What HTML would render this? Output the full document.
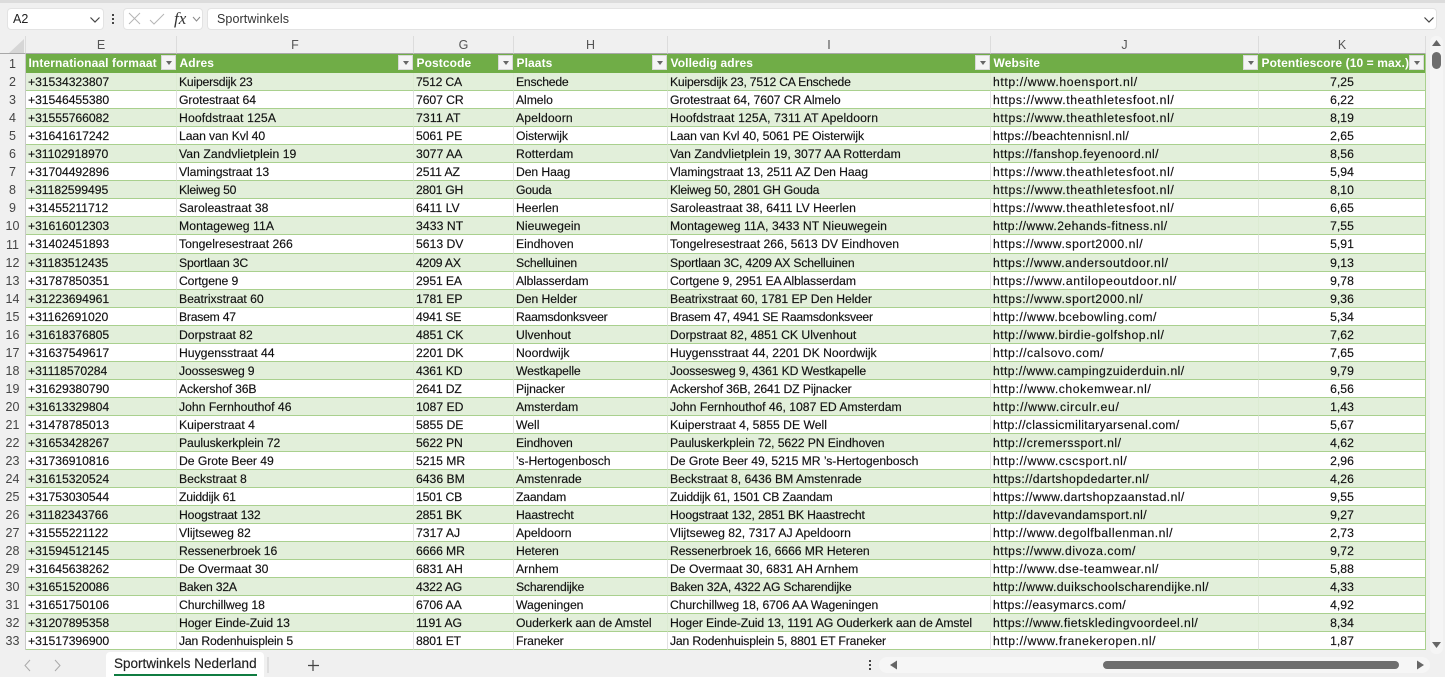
<!DOCTYPE html>
<html><head><meta charset="utf-8"><style>
html,body{margin:0;padding:0;width:1445px;height:677px;overflow:hidden;background:#f0f0f0;font-family:"Liberation Sans",sans-serif}
*{box-sizing:border-box}
.abs{position:absolute}
.box{position:absolute;background:#fff;border:1px solid #e3e3e3;border-radius:4px}
table{position:absolute;left:0;top:36px;border-collapse:separate;border-spacing:0;table-layout:fixed;width:1426px}
td{padding:0;overflow:hidden;white-space:nowrap;font-weight:normal}
.ch td{height:18px;text-align:center;font-size:12.500px;color:#555;border-bottom:1px solid #a8a8a8;border-right:1px solid #dcdcdc;padding-top:1px}
.hd td{height:19px;background:#70ad47;color:#fff;font-weight:bold;font-size:12px;padding:0 0 1px 2.500px;letter-spacing:.1px;position:relative}
tr.r td{height:18px;font-size:12.2px;color:#111;padding-left:2px;border-bottom:1px solid #a9d08e;border-right:1px solid #e2e2e2;background:#fff;-webkit-text-stroke:.15px #111}
tbody tr.r:nth-child(odd) td{background:#e2efda;border-right-color:#dcebd2}
tr.tall td{height:19px!important}
tr.r td:nth-child(2){letter-spacing:-.05px}
tr.r td:nth-child(7){letter-spacing:.42px}
td.n{background:#f0f0f0!important;border:0!important;border-right:1px solid #c8c8c8!important;text-align:center;padding:0!important;color:#444!important;font-size:12.500px!important;font-weight:normal!important;letter-spacing:0!important;-webkit-text-stroke:0!important}
tr.r td.c{text-align:center;padding-left:0;letter-spacing:0}
tr.r td:last-child,.hd td:last-child{border-right:1px solid #a9d08e!important}
.f{position:absolute;right:1px;top:1px;width:15px;height:15px;background:#f4f4f4;border:1px solid #d8d8d8}
.f:after{content:"";position:absolute;left:4px;top:5px;border:3px solid transparent;border-top:4px solid #666;border-bottom:0}
</style></head><body>
<div class="abs" style="left:0;top:0;width:1445px;height:3px;background:#dcdcdc"></div>
<div class="box" style="left:7px;top:8px;width:97px;height:22px;font-size:12.500px;color:#222;padding:3px 0 0 5px">A2
<svg class="abs" style="left:81px;top:7px" width="12" height="8"><path d="M1.5 1.5 L6 6 L10.5 1.5" fill="none" stroke="#444" stroke-width="1.2"/></svg></div>
<svg class="abs" style="left:110px;top:13px" width="6" height="13"><g fill="#444"><rect x="2" y="1" width="2" height="2"/><rect x="2" y="5" width="2" height="2"/><rect x="2" y="9" width="2" height="2"/></g></svg>
<div class="box" style="left:123px;top:8px;width:80px;height:22px"></div>
<svg class="abs" style="left:127px;top:11px" width="76" height="17"><path d="M2 2 L13 13 M13 2 L2 13" stroke="#b5b5b5" stroke-width="1" fill="none"/><path d="M23 9 L27 13 L37 3" stroke="#b5b5b5" fill="none"/><path d="M66 6 L69.500 10 L73 6" stroke="#888" fill="none"/></svg>
<div class="abs" style="left:174px;top:9px;font:italic 17px 'Liberation Serif',serif;color:#333">fx</div>
<div class="box" style="left:207px;top:8px;width:1230px;height:22px;font-size:12.500px;color:#333;padding:3px 0 0 9px;letter-spacing:.1px">Sportwinkels
<svg class="abs" style="left:1215px;top:7px" width="12" height="8"><path d="M1.5 1.5 L6 6 L10.500 1.5" fill="none" stroke="#444" stroke-width="1.2"/></svg></div>
<table>
<colgroup><col style="width:26px"><col style="width:151px"><col style="width:237px"><col style="width:100px"><col style="width:154px"><col style="width:323px"><col style="width:268px"><col style="width:167px"></colgroup>
<tbody>
<tr class="ch"><td style="background:#f0f0f0"></td><td>E</td><td>F</td><td>G</td><td>H</td><td>I</td><td>J</td><td>K</td></tr>
<tr class="hd"><td class="n">1</td><td>Internationaal formaat<span class="f"></span></td><td>Adres<span class="f"></span></td><td>Postcode<span class="f"></span></td><td>Plaats<span class="f"></span></td><td>Volledig adres<span class="f"></span></td><td>Website<span class="f"></span></td><td>Potentiescore (10 = max.)<span class="f"></span></td></tr>
<tr class="r" style="letter-spacing:-.22px"><td class="n">2</td><td>+31534323807</td><td>Kuipersdijk 23</td><td>7512 CA</td><td>Enschede</td><td>Kuipersdijk 23, 7512 CA Enschede</td><td style="letter-spacing:.61px">http://www.hoensport.nl/</td><td class="c">7,25</td></tr>
<tr class="r" style="letter-spacing:-.07px"><td class="n">3</td><td>+31546455380</td><td>Grotestraat 64</td><td>7607 CR</td><td>Almelo</td><td>Grotestraat 64, 7607 CR Almelo</td><td style="letter-spacing:.63px">https://www.theathletesfoot.nl/</td><td class="c">6,22</td></tr>
<tr class="r" style="letter-spacing:.14px"><td class="n">4</td><td>+31555766082</td><td>Hoofdstraat 125A</td><td>7311 AT</td><td>Apeldoorn</td><td>Hoofdstraat 125A, 7311 AT Apeldoorn</td><td style="letter-spacing:.63px">https://www.theathletesfoot.nl/</td><td class="c">8,19</td></tr>
<tr class="r" style="letter-spacing:-.09px"><td class="n">5</td><td>+31641617242</td><td>Laan van Kvl 40</td><td>5061 PE</td><td>Oisterwijk</td><td>Laan van Kvl 40, 5061 PE Oisterwijk</td><td style="letter-spacing:.32px">https://beachtennisnl.nl/</td><td class="c">2,65</td></tr>
<tr class="r" style="letter-spacing:.05px"><td class="n">6</td><td>+31102918970</td><td>Van Zandvlietplein 19</td><td>3077 AA</td><td>Rotterdam</td><td>Van Zandvlietplein 19, 3077 AA Rotterdam</td><td>https://fanshop.feyenoord.nl/</td><td class="c">8,56</td></tr>
<tr class="r" style="letter-spacing:-.09px"><td class="n">7</td><td>+31704492896</td><td>Vlamingstraat 13</td><td>2511 AZ</td><td>Den Haag</td><td>Vlamingstraat 13, 2511 AZ Den Haag</td><td style="letter-spacing:.63px">https://www.theathletesfoot.nl/</td><td class="c">5,94</td></tr>
<tr class="r" style="letter-spacing:-.24px"><td class="n">8</td><td>+31182599495</td><td>Kleiweg 50</td><td>2801 GH</td><td>Gouda</td><td>Kleiweg 50, 2801 GH Gouda</td><td style="letter-spacing:.63px">https://www.theathletesfoot.nl/</td><td class="c">8,10</td></tr>
<tr class="r"><td class="n">9</td><td>+31455211712</td><td>Saroleastraat 38</td><td>6411 LV</td><td>Heerlen</td><td>Saroleastraat 38, 6411 LV Heerlen</td><td style="letter-spacing:.63px">https://www.theathletesfoot.nl/</td><td class="c">6,65</td></tr>
<tr class="r" style="letter-spacing:.08px"><td class="n">10</td><td>+31616012303</td><td>Montageweg 11A</td><td>3433 NT</td><td>Nieuwegein</td><td>Montageweg 11A, 3433 NT Nieuwegein</td><td>http://www.2ehands-fitness.nl/</td><td class="c">7,55</td></tr>
<tr class="r tall"><td class="n">11</td><td>+31402451893</td><td>Tongelresestraat 266</td><td>5613 DV</td><td>Eindhoven</td><td>Tongelresestraat 266, 5613 DV Eindhoven</td><td style="letter-spacing:.56px">https://www.sport2000.nl/</td><td class="c">5,91</td></tr>
<tr class="r" style="letter-spacing:-.18px"><td class="n">12</td><td>+31183512435</td><td>Sportlaan 3C</td><td>4209 AX</td><td>Schelluinen</td><td>Sportlaan 3C, 4209 AX Schelluinen</td><td style="letter-spacing:.54px">https://www.andersoutdoor.nl/</td><td class="c">9,13</td></tr>
<tr class="r" style="letter-spacing:-.12px"><td class="n">13</td><td>+31787850351</td><td>Cortgene 9</td><td>2951 EA</td><td>Alblasserdam</td><td>Cortgene 9, 2951 EA Alblasserdam</td><td style="letter-spacing:.6px">https://www.antilopeoutdoor.nl/</td><td class="c">9,78</td></tr>
<tr class="r" style="letter-spacing:-.05px"><td class="n">14</td><td>+31223694961</td><td>Beatrixstraat 60</td><td>1781 EP</td><td>Den Helder</td><td>Beatrixstraat 60, 1781 EP Den Helder</td><td style="letter-spacing:.56px">https://www.sport2000.nl/</td><td class="c">9,36</td></tr>
<tr class="r" style="letter-spacing:-.24px"><td class="n">15</td><td>+31162691020</td><td>Brasem 47</td><td>4941 SE</td><td>Raamsdonksveer</td><td>Brasem 47, 4941 SE Raamsdonksveer</td><td style="letter-spacing:.52px">http://www.bcebowling.com/</td><td class="c">5,34</td></tr>
<tr class="r"><td class="n">16</td><td>+31618376805</td><td>Dorpstraat 82</td><td>4851 CK</td><td>Ulvenhout</td><td>Dorpstraat 82, 4851 CK Ulvenhout</td><td style="letter-spacing:.52px">http://www.birdie-golfshop.nl/</td><td class="c">7,62</td></tr>
<tr class="r"><td class="n">17</td><td>+31637549617</td><td>Huygensstraat 44</td><td>2201 DK</td><td>Noordwijk</td><td>Huygensstraat 44, 2201 DK Noordwijk</td><td style="letter-spacing:.5px">http://calsovo.com/</td><td class="c">7,65</td></tr>
<tr class="r" style="letter-spacing:-.15px"><td class="n">18</td><td>+31118570284</td><td>Joossesweg 9</td><td>4361 KD</td><td>Westkapelle</td><td>Joossesweg 9, 4361 KD Westkapelle</td><td>http://www.campingzuiderduin.nl/</td><td class="c">9,79</td></tr>
<tr class="r" style="letter-spacing:-.15px"><td class="n">19</td><td>+31629380790</td><td>Ackershof 36B</td><td>2641 DZ</td><td>Pijnacker</td><td>Ackershof 36B, 2641 DZ Pijnacker</td><td style="letter-spacing:.56px">http://www.chokemwear.nl/</td><td class="c">6,56</td></tr>
<tr class="r"><td class="n">20</td><td>+31613329804</td><td>John Fernhouthof 46</td><td>1087 ED</td><td>Amsterdam</td><td>John Fernhouthof 46, 1087 ED Amsterdam</td><td style="letter-spacing:.67px">http://www.circulr.eu/</td><td class="c">1,43</td></tr>
<tr class="r"><td class="n">21</td><td>+31478785013</td><td>Kuiperstraat 4</td><td>5855 DE</td><td>Well</td><td>Kuiperstraat 4, 5855 DE Well</td><td style="letter-spacing:.33px">http://classicmilitaryarsenal.com/</td><td class="c">5,67</td></tr>
<tr class="r" style="letter-spacing:-.1px"><td class="n">22</td><td>+31653428267</td><td>Pauluskerkplein 72</td><td>5622 PN</td><td>Eindhoven</td><td>Pauluskerkplein 72, 5622 PN Eindhoven</td><td style="letter-spacing:.46px">http://cremerssport.nl/</td><td class="c">4,62</td></tr>
<tr class="r" style="letter-spacing:-.05px"><td class="n">23</td><td>+31736910816</td><td>De Grote Beer 49</td><td>5215 MR</td><td>’s-Hertogenbosch</td><td>De Grote Beer 49, 5215 MR ’s-Hertogenbosch</td><td style="letter-spacing:.57px">http://www.cscsport.nl/</td><td class="c">2,96</td></tr>
<tr class="r"><td class="n">24</td><td>+31615320524</td><td>Beckstraat 8</td><td>6436 BM</td><td>Amstenrade</td><td>Beckstraat 8, 6436 BM Amstenrade</td><td style="letter-spacing:.4px">https://dartshopdedarter.nl/</td><td class="c">4,26</td></tr>
<tr class="r" style="letter-spacing:-.2px"><td class="n">25</td><td>+31753030544</td><td>Zuiddijk 61</td><td>1501 CB</td><td>Zaandam</td><td>Zuiddijk 61, 1501 CB Zaandam</td><td style="letter-spacing:.4px">https://www.dartshopzaanstad.nl/</td><td class="c">9,55</td></tr>
<tr class="r" style="letter-spacing:-.13px"><td class="n">26</td><td>+31182343766</td><td>Hoogstraat 132</td><td>2851 BK</td><td>Haastrecht</td><td>Hoogstraat 132, 2851 BK Haastrecht</td><td style="letter-spacing:.4px">http://davevandamsport.nl/</td><td class="c">9,27</td></tr>
<tr class="r"><td class="n">27</td><td>+31555221122</td><td>Vlijtseweg 82</td><td>7317 AJ</td><td>Apeldoorn</td><td>Vlijtseweg 82, 7317 AJ Apeldoorn</td><td style="letter-spacing:.49px">http://www.degolfballenman.nl/</td><td class="c">2,73</td></tr>
<tr class="r" style="letter-spacing:-.09px"><td class="n">28</td><td>+31594512145</td><td>Ressenerbroek 16</td><td>6666 MR</td><td>Heteren</td><td>Ressenerbroek 16, 6666 MR Heteren</td><td style="letter-spacing:.53px">https://www.divoza.com/</td><td class="c">9,72</td></tr>
<tr class="r"><td class="n">29</td><td>+31645638262</td><td>De Overmaat 30</td><td>6831 AH</td><td>Arnhem</td><td>De Overmaat 30, 6831 AH Arnhem</td><td style="letter-spacing:.5px">http://www.dse-teamwear.nl/</td><td class="c">5,88</td></tr>
<tr class="r" style="letter-spacing:-.2px"><td class="n">30</td><td>+31651520086</td><td>Baken 32A</td><td>4322 AG</td><td>Scharendijke</td><td>Baken 32A, 4322 AG Scharendijke</td><td style="letter-spacing:.38px">http://www.duikschoolscharendijke.nl/</td><td class="c">4,33</td></tr>
<tr class="r" style="letter-spacing:-.06px"><td class="n">31</td><td>+31651750106</td><td>Churchillweg 18</td><td>6706 AA</td><td>Wageningen</td><td>Churchillweg 18, 6706 AA Wageningen</td><td style="letter-spacing:.35px">https://easymarcs.com/</td><td class="c">4,92</td></tr>
<tr class="r" style="letter-spacing:-.09px"><td class="n">32</td><td>+31207895358</td><td>Hoger Einde-Zuid 13</td><td>1191 AG</td><td>Ouderkerk aan de Amstel</td><td>Hoger Einde-Zuid 13, 1191 AG Ouderkerk aan de Amstel</td><td style="letter-spacing:.43px">https://www.fietskledingvoordeel.nl/</td><td class="c">8,34</td></tr>
<tr class="r" style="letter-spacing:-.16px"><td class="n">33</td><td>+31517396900</td><td>Jan Rodenhuisplein 5</td><td>8801 ET</td><td>Franeker</td><td>Jan Rodenhuisplein 5, 8801 ET Franeker</td><td style="letter-spacing:.57px">http://www.franekeropen.nl/</td><td class="c">1,87</td></tr>
</tbody></table>
<svg class="abs" style="left:8px;top:38px" width="17" height="16"><path d="M16 1 V15 H1 Z" fill="#d6d6d6"/></svg>
<div class="abs" style="left:1430px;top:36px;width:13px;height:618px;background:#f5f5f5;border-radius:6px"></div>
<svg class="abs" style="left:1430px;top:38px" width="13" height="615"><path d="M6.5 2 L11 8 H2 Z" fill="#666"/><rect x="2" y="14" width="9" height="17" rx="4.500" fill="#6e6e6e"/><path d="M2 604 H11 L6.500 610 Z" fill="#666"/></svg>
<div class="abs" style="left:106px;top:652px;width:158px;height:25px;background:#fff;border-radius:4px 4px 0 0;font-size:13.500px;color:#222;padding:4px 0 0 8px;white-space:nowrap;-webkit-text-stroke:.15px #222">Sportwinkels Nederland</div>
<div class="abs" style="left:114px;top:674px;width:143px;height:2px;background:#107c41"></div>
<svg class="abs" style="left:20px;top:656px" width="310" height="18"><path d="M10 4 L5 9.500 L10 15 M35 4 L40 9.500 L35 15" stroke="#aaa" fill="none"/><path d="M248 1 V17" stroke="#ccc"/><path d="M293 4 V15 M288 9.500 H299" stroke="#444" stroke-width="1.2" fill="none"/></svg>
<div class="abs" style="left:879px;top:657px;width:551px;height:16px;background:#f6f6f6;border-radius:8px"></div>
<svg class="abs" style="left:860px;top:657px" width="570" height="16"><g fill="#444"><rect x="9" y="3" width="2" height="2"/><rect x="9" y="7" width="2" height="2"/><rect x="9" y="11" width="2" height="2"/></g><path d="M30 8 L37 3.500 V12.500 Z" fill="#666"/><rect x="243" y="4" width="296" height="8" rx="4" fill="#6e6e6e"/><path d="M564 8 L557 3.500 V12.500 Z" fill="#666"/></svg>
</body></html>
